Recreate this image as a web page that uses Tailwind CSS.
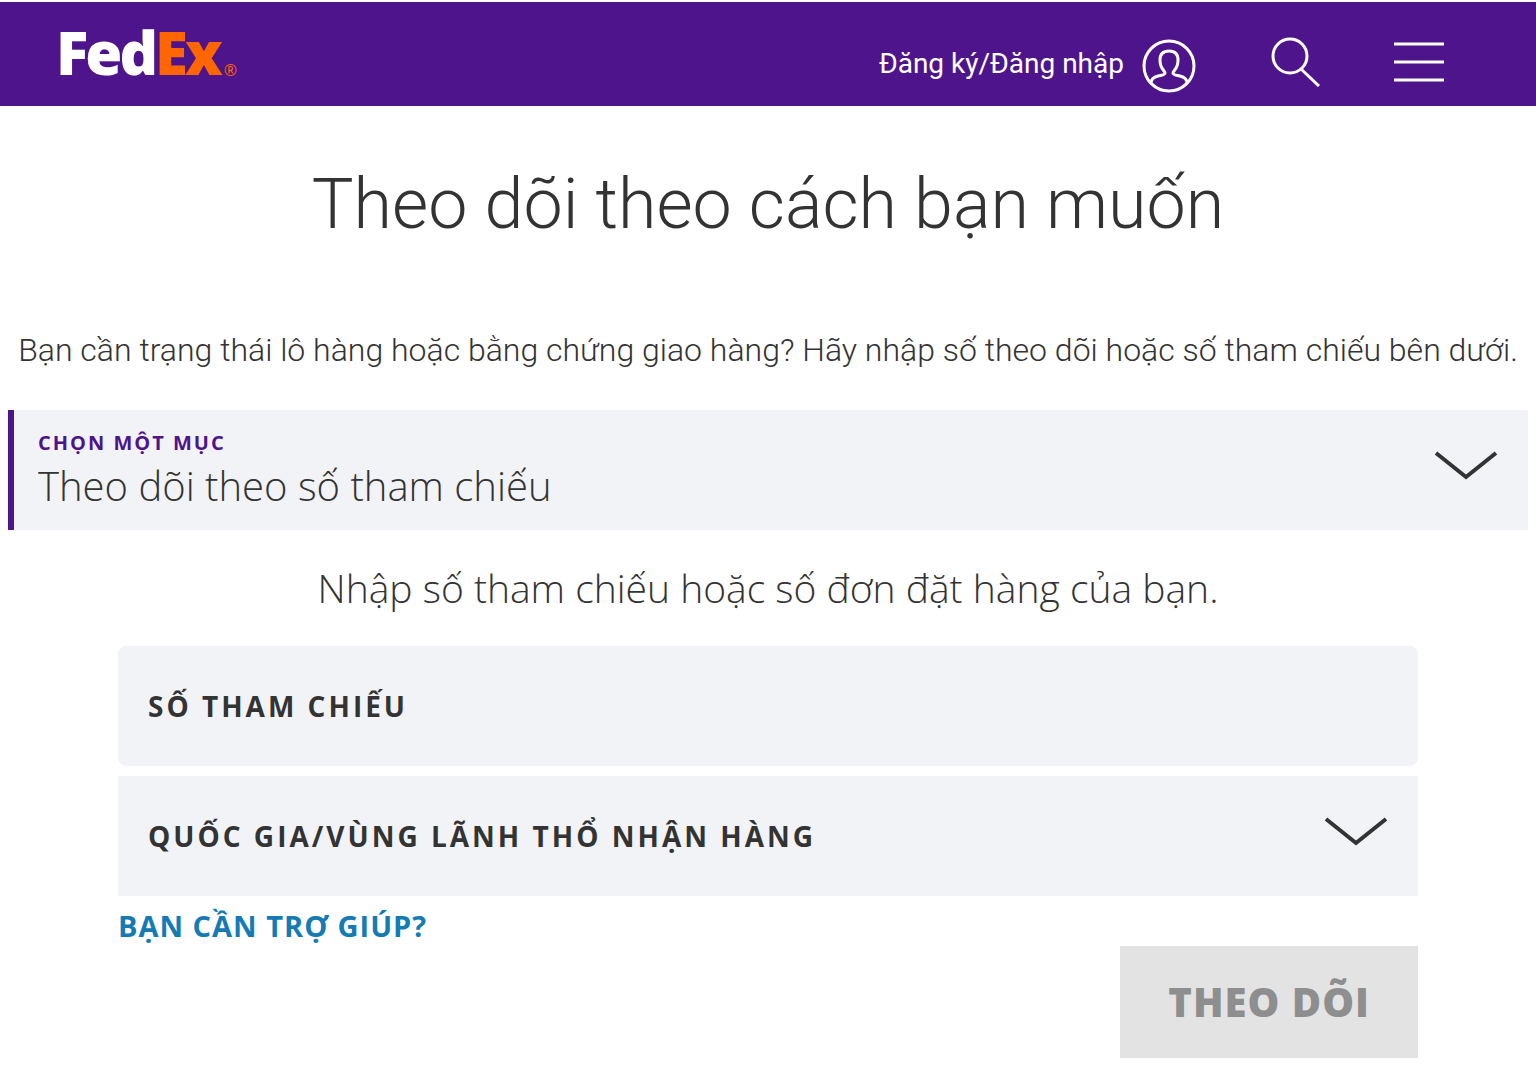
<!DOCTYPE html>
<html lang="vi">

<head>
  <title>FedEx - Theo dõi</title>
  <meta charset="UTF-8">
  <meta name="viewport" content="width=device-width, initial-scale=1.0">
  <script src="https://cdn.jsdelivr.net/npm/@tailwindcss/browser@4"></script>
</head>

<body class="bg-white text-[#333333] font-['Open_Sans',sans-serif]">
  <header class="mt-[2px] h-[104px] bg-[#4d148c] text-white flex items-center justify-between pl-14 pr-[92px]">
    <a href="#" aria-label="FedEx" class="flex items-end pb-1">
      <span class="text-[60px] leading-[60px] font-extrabold tracking-tighter">Fed<span class="text-[#ff6600]">Ex</span></span>
      <span class="text-[16px] leading-[24px] text-[#ff6600] ml-1">®</span>
    </a>

    <div class="flex items-center pt-6">
      <a href="#" class="flex items-center gap-[18px] font-['Roboto',sans-serif] text-[28px]">
        <span class="pb-1">Đăng ký/Đăng nhập</span>
        <svg class="w-[54px] h-[54px]" viewBox="0 0 54 54" fill="none" stroke="currentColor" stroke-width="3">
          <circle cx="27" cy="27" r="25" />
          <path d="M9 44C9 40 12 38 16 37C20 36 23 36 23 34C23 31 18 31 18 21C18 15 21 12 27 12C33 12 36 15 36 21C36 31 31 31 31 34C31 36 34 36 38 37C42 38 45 40 45 44" />
        </svg>
      </a>
      <button type="button" aria-label="Tìm kiếm" class="ml-[74px] pb-2">
        <svg class="w-[50px] h-[50px]" viewBox="0 0 50 50" fill="none" stroke="currentColor" stroke-width="3">
          <circle cx="20" cy="19" r="17" />
          <path d="M31 32L49 49" />
        </svg>
      </button>
      <button type="button" aria-label="Menu" class="ml-[74px] pb-2">
        <svg class="w-[50px] h-[40px]" viewBox="0 0 50 40" fill="none" stroke="currentColor" stroke-width="3">
          <path d="M0 2H50M0 20H50M0 38H50" />
        </svg>
      </button>
    </div>
  </header>

  <main class="px-2">
    <h1 class="pt-[56px] text-center font-['Roboto',sans-serif] font-light text-[70px] leading-[84px]">Theo dõi theo cách bạn muốn</h1>
    <p class="mt-[84px] text-center whitespace-nowrap font-['Roboto',sans-serif] font-light text-[32px] leading-[40px]">Bạn cần trạng thái lô hàng hoặc bằng chứng giao hàng? Hãy nhập số theo dõi hoặc số tham chiếu bên dưới.</p>

    <form>
      <div class="relative mt-[40px] h-[120px] bg-[#f2f3f7] border-l-[6px] border-[#4d148c] pt-5">
        <label for="track-type" class="block pl-6 text-[20px] leading-[26px] font-bold tracking-[2px] text-[#4d148c]">CHỌN MỘT MỤC</label>
        <select id="track-type" class="block w-full appearance-none pl-6 text-[40px] leading-[60px] font-light">
          <option>Theo dõi theo số tham chiếu</option>
        </select>
        <svg class="absolute right-[30px] top-[40px] w-[64px] h-[30px] pointer-events-none" viewBox="0 0 64 30" fill="none" stroke="currentColor" stroke-width="4">
          <path d="M2 3L32 27L62 3" />
        </svg>
      </div>

      <p class="mt-[28px] text-center text-[39px] leading-[60px] font-light">Nhập số tham chiếu hoặc số đơn đặt hàng của bạn.</p>

      <div class="mx-[110px] mt-[28px]">
        <input type="text" aria-label="Số tham chiếu" placeholder="SỐ THAM CHIẾU" class="block w-full h-[120px] rounded-lg bg-[#f2f3f7] px-[30px] text-[28px] font-bold tracking-[3px] placeholder:text-[#333333]">
        <div class="relative mt-[10px]">
          <select aria-label="Quốc gia/vùng lãnh thổ nhận hàng" class="block w-full h-[120px] appearance-none bg-[#f2f3f7] px-[30px] text-[28px] font-bold tracking-[3px]">
            <option>QUỐC GIA/VÙNG LÃNH THỔ NHẬN HÀNG</option>
          </select>
          <svg class="absolute right-[30px] top-[40px] w-[64px] h-[30px] pointer-events-none" viewBox="0 0 64 30" fill="none" stroke="currentColor" stroke-width="4">
            <path d="M2 3L32 27L62 3" />
          </svg>
        </div>
        <a href="#" class="block w-fit pt-[10px] text-[29px] leading-[40px] font-bold tracking-[1px] text-[#147bb5]">BẠN CẦN TRỢ GIÚP?</a>
        <button type="submit" disabled class="block ml-auto h-[112px] px-[48px] bg-[#e3e3e3] text-[#8e8e8e] text-[40px] font-extrabold tracking-[1px]">THEO DÕI</button>
      </div>
    </form>
  </main>
</body>

</html>
